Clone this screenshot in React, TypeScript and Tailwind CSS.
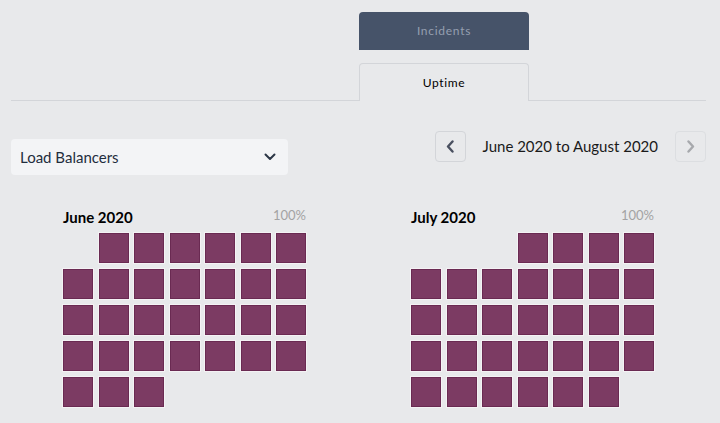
import React from "react"

type Month = { name: string; offset: number; days: number }

const months: Month[] = [
    { name: "June 2020", offset: 1, days: 30 },
    { name: "July 2020", offset: 3, days: 31 },
]

function MonthGrid({ month }: { month: Month }) {
    const cells: (number | null)[] = []
    for (let i = 0; i < month.offset; i++) cells.push(null)
    for (let d = 1; d <= month.days; d++) cells.push(d)

    return (
        <div className="w-[243px]">
            <div className="flex items-end justify-between h-[26px] mb-[7px]">
                <span className="text-[15px] font-bold text-black leading-none pb-[1px]">{month.name}</span>
                <span className="text-[13px] text-[#a3a3a3] leading-none pb-[4px]">100%</span>
            </div>
            <div className="grid grid-cols-[repeat(7,30px)] gap-x-[5.5px] gap-y-[6px]">
                {cells.map((d, i) =>
                    d === null ? (
                        <div key={i} className="h-[30px]"></div>
                    ) : (
                        <div
                            key={i}
                            className="h-[30px] w-[30px] bg-[#7c3b63] border border-[#6a2a52] shadow-[0_0_0_1px_#f4f2f4]"
                        ></div>
                    )
                )}
            </div>
        </div>
    )
}

export default function App() {
    return (
        <div className="w-[720px] h-[423px] overflow-hidden bg-[#e8e9eb]" style={{ fontFamily: "Lato, 'Open Sans', sans-serif" }}>
            {/* Tabs */}
            <div className="pt-[12px] pl-[359px] flex flex-col gap-[13px]">
                <div className="w-[170px] h-[38px] rounded-t-[4px] bg-[#465369] flex items-center justify-center text-[12px] tracking-[0.06em] text-[#959fb0]">
                    Incidents
                </div>
                <div className="w-[170px] h-[38px] rounded-t-[4px] border border-b-0 border-[#d3d5d9] bg-[#e8e9eb] flex items-center justify-center text-[12px] tracking-[0.05em] text-black relative z-10">
                    Uptime
                </div>
            </div>
            <div className="mx-[11px] mr-[14px] -mt-[1px] h-px bg-[#d3d5d9]"></div>

            {/* Controls */}
            <div className="flex justify-between pl-[11px] pr-[14px] mt-[30px]">
                <div className="mt-[8px] w-[277px] h-[36px] rounded-[4px] bg-[#f3f4f6] flex items-center justify-between pl-[9px] pr-[12px]">
                    <span className="text-[15px] text-[#1f2d3d]">Load Balancers</span>
                    <svg width="12" height="8" viewBox="0 0 12 8" fill="none">
                        <path d="M1.5 1.5 6 6l4.5-4.5" stroke="#2b3646" strokeWidth="2" strokeLinecap="round" strokeLinejoin="round" />
                    </svg>
                </div>
                <div className="flex items-center h-[31px]">
                    <button className="w-[31px] h-[31px] rounded-[4px] border border-[#d3d5d9] flex items-center justify-center">
                        <svg width="9" height="13" viewBox="0 0 9 13" fill="none">
                            <path d="M6.5 1.5 2 6.5l4.5 5" stroke="#4a5060" strokeWidth="2.4" strokeLinecap="round" strokeLinejoin="round" />
                        </svg>
                    </button>
                    <span className="mx-[17px] text-[15px] text-[#1a1a1a]">June 2020 to August 2020</span>
                    <button className="w-[31px] h-[31px] rounded-[4px] border border-[#dcdee1] flex items-center justify-center">
                        <svg width="9" height="13" viewBox="0 0 9 13" fill="none">
                            <path d="M2.5 1.5 7 6.5l-4.5 5" stroke="#a7a9ad" strokeWidth="2.4" strokeLinecap="round" strokeLinejoin="round" />
                        </svg>
                    </button>
                </div>
            </div>

            {/* Calendars */}
            <div className="flex gap-[105px] pl-[63px] mt-[25px]">
                {months.map((m) => (
                    <MonthGrid key={m.name} month={m} />
                ))}
            </div>
        </div>
    )
}
